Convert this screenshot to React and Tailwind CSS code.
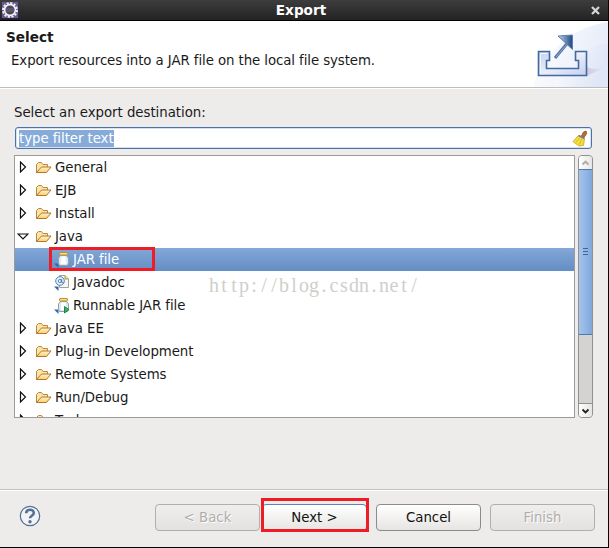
import React from 'react'
import clsx from 'clsx'

const items = [
  { label: 'General' },
  { label: 'EJB' },
  { label: 'Install' },
  { label: 'Java', open: true },
  { label: 'JAR file', icon: 'jar', selected: true },
  { label: 'Javadoc', icon: 'javadoc' },
  { label: 'Runnable JAR file', icon: 'runjar' },
  { label: 'Java EE' },
  { label: 'Plug-in Development' },
  { label: 'Remote Systems' },
  { label: 'Run/Debug' },
  { label: 'Tasks' },
]

function EclipseIcon() {
  return (
    <svg width="16" height="16" viewBox="0 0 16 16">
      <rect width="16" height="16" fill="#6b579b" />
      <circle cx="8" cy="8" r="7" fill="none" stroke="#eeeeee" strokeWidth="2" strokeDasharray="2.2 1.46" />
      <circle cx="8" cy="8" r="5.4" fill="#4a4658" stroke="#f4f4f4" strokeWidth="1.6" />
      <path d="M4 7h8M4 9h8" stroke="#6d6590" />
    </svg>
  )
}

function ExportBanner() {
  return (
    <svg width="75" height="66" viewBox="0 0 75 66" className="shrink-0">
      <defs>
        <linearGradient id="haze" x1="0" y1="0" x2="1" y2="0.3">
          <stop offset="0" stopColor="#ffffff" />
          <stop offset="1" stopColor="#dce4f6" />
        </linearGradient>
        <linearGradient id="tray" x1="0" y1="0" x2="1" y2="1">
          <stop offset="0" stopColor="#c4d2ea" />
          <stop offset="0.5" stopColor="#e9edf9" />
          <stop offset="1" stopColor="#c5d0eb" />
        </linearGradient>
        <linearGradient id="head" x1="0" y1="0" x2="1" y2="0">
          <stop offset="0" stopColor="#c7d8ec" />
          <stop offset="1" stopColor="#1e4584" />
        </linearGradient>
        <linearGradient id="shade" x1="0" y1="0" x2="1" y2="0">
          <stop offset="0" stopColor="#c9bfd2" />
          <stop offset="1" stopColor="#e2e4f4" />
        </linearGradient>
      </defs>
      <path d="M0 66C8 34 38 6 75 1V66z" fill="url(#haze)" opacity="0.7" />
      <path d="M20 66C28 42 48 26 75 22V66z" fill="url(#haze)" opacity="0.8" />
      <path d="M54 46C60 49 66 48 72 46L54 55z" fill="url(#shade)" opacity="0.7" />
      <path
        d="M5.500 30.500H16.500V39.500H13.500V47.500H45.500V39.500H42.500V30.500H53.500V54.500H5.500z"
        fill="url(#tray)"
        stroke="#4169a3"
        strokeWidth="1.600"
      />
      <path d="M7.500 32.500H14.500M7.500 32.500V52.500M44.500 32.500H51.500" fill="none" stroke="#f3f6fd" />
      <path d="M22 37L34.500 22" stroke="#54739f" strokeWidth="3" />
      <path d="M23 36L34 23" stroke="#8fadd3" strokeWidth="1" />
      <path d="M25 15L39.500 14V28.500z" fill="url(#head)" stroke="#5e80ae" />
    </svg>
  )
}

function BroomIcon() {
  return (
    <svg width="16" height="17" viewBox="0 0 16 17">
      <path d="M9.500 6L11.500 2L14 1L14.700 3.500L12 7.500z" fill="#b27429" stroke="#785020" strokeWidth="0.800" />
      <path d="M6.500 5.500L12.500 8.500L11.500 15.500L7 16L1 11.500z" fill="#f4df3c" stroke="#bfa41c" strokeWidth="0.800" />
      <path d="M4 12L8 7.500M7.500 14.500L9.800 8.500" stroke="#c4a91e" strokeWidth="0.700" />
      <path d="M6.500 5.500L12.500 8.500" stroke="#8672a0" strokeWidth="1.500" />
    </svg>
  )
}

function FolderIcon() {
  return (
    <svg width="16" height="16" viewBox="0 0 16 16">
      <defs>
        <linearGradient id="folder" x1="0" y1="0" x2="0" y2="1">
          <stop offset="0" stopColor="#fff5d0" />
          <stop offset="1" stopColor="#f8cf6c" />
        </linearGradient>
      </defs>
      <path d="M0.500 12.500V4.500L2.500 2.500H5.500L7 4.500H11.500V7" fill="#fae4a8" stroke="#bf853a" />
      <path d="M0.500 12.500L5.500 7H15L10.500 12.500z" fill="url(#folder)" stroke="#b5752a" />
    </svg>
  )
}

function ChildIcon({ kind }) {
  return (
    <svg width="16" height="18" viewBox="0 0 16 18">
      <path d="M0 12.500H4.500V17z" fill="#2d6ca5" />
      {kind === 'javadoc' ? (
        <>
          <path d="M5.500 1.500H11L14.500 5V13.500H5.500z" fill="#f3f6fe" stroke="#a9a08a" />
          <path d="M11 1.500V5H14.500" fill="#ecd28a" stroke="#b99b4c" />
          <circle cx="6" cy="7" r="4.300" fill="#eef4fc" stroke="#3d73ac" strokeWidth="0.900" />
          <circle cx="5.800" cy="7" r="1.600" fill="none" stroke="#3d73ac" strokeWidth="0.900" />
          <path d="M7.700 5V8.600H9.500" fill="none" stroke="#3d73ac" strokeWidth="0.900" />
        </>
      ) : (
        <>
          <path d="M6.500 4.500H12.500L14.500 7V12L13.500 14.500H5.500L4.500 12V7z" fill="#dfe9ee" stroke="#8ba2b1" />
          <path d="M7.500 5.500H11.500L12.500 13H6.500z" fill="#ffffff" />
          <rect x="5.500" y="1.500" width="8" height="2.500" rx="0.500" fill="#f8dc86" stroke="#c2922f" />
          {kind === 'runjar' && <path d="M10.500 9.500L15 12.700L10.500 16z" fill="#3aae68" stroke="#208447" />}
        </>
      )}
    </svg>
  )
}

function Expander({ open }) {
  return (
    <svg width="12" height="12" viewBox="0 0 12 12" className="mb-px">
      {open ? (
        <path d="M1 4H11L6 9z" fill="#fff" stroke="#111" strokeWidth="1.200" />
      ) : (
        <path d="M3.500 1V11L8.500 6z" fill="#fff" stroke="#111" strokeWidth="1.200" />
      )}
    </svg>
  )
}

function TreeRow({ item }) {
  return (
    <div
      className={clsx(
        'flex h-[23px] shrink-0 items-center tracking-[-0.06px]',
        item.selected ? 'bg-linear-to-b from-[#83a8d9] to-[#648dc3] text-white' : 'text-[#1a1a1a]',
        item.icon ? 'pl-[39px]' : 'pl-[2px]'
      )}
    >
      {item.icon ? (
        <ChildIcon kind={item.icon} />
      ) : (
        <>
          <Expander open={item.open} />
          <span className="ml-[7px]"><FolderIcon /></span>
        </>
      )}
      <span className="ml-[3px] whitespace-nowrap">{item.label}</span>
    </div>
  )
}

function Scrollbar() {
  return (
    <div className="flex h-[263px] w-[15px] flex-col overflow-hidden rounded-[4px] border border-[#919191] bg-[#d4d3d2]">
      <div className="flex h-[13px] items-center justify-center bg-linear-to-r from-white to-[#e5e5e3]">
        <svg width="9" height="6" viewBox="0 0 9 6"><path d="M1.500 4.500L4.500 1.500L7.500 4.500" fill="none" stroke="#aaa" strokeWidth="1.800" /></svg>
      </div>
      <div className="-mx-px flex h-[166px] flex-col items-center justify-center gap-[2px] border border-[#4e78b2] bg-linear-to-r from-[#a6c4ec] to-[#80a8dc] pb-[2px]">
        <div className="h-px w-[5px] bg-[#3f679f]" />
        <div className="h-px w-[5px] bg-[#3f679f]" />
        <div className="h-px w-[5px] bg-[#3f679f]" />
      </div>
      <div className="flex-1" />
      <div className="flex h-[14px] items-center justify-center border-t border-[#919191] bg-linear-to-r from-white to-[#e5e5e3]">
        <svg width="9" height="6" viewBox="0 0 9 6"><path d="M1.500 1.500L4.500 4.500L7.500 1.500" fill="none" stroke="#222" strokeWidth="1.800" /></svg>
      </div>
    </div>
  )
}

function Button({ children, disabled, focused }) {
  return (
    <button
      disabled={disabled}
      className={clsx(
        'h-[27px] w-[105px] rounded-[4px] border',
        disabled
          ? 'border-[#b0afad] bg-linear-to-b from-[#efeeed] to-[#e3e2e0] text-[#b0aeab] [text-shadow:1px_1px_0_#fff]'
          : 'bg-linear-to-b from-white to-[#e6e5e3] text-[#111]',
        !disabled && (focused ? 'border-[#5f84b5]' : 'border-[#8d8b88]')
      )}
    >
      {children}
    </button>
  )
}

function App() {
  return (
    <div className="relative flex h-[548px] w-[609px] flex-col overflow-hidden border-r border-b border-black bg-[#edeceb] font-['DejaVu_Sans',sans-serif] text-[13.33px] text-[#1a1a1a]">
      <div className="flex h-[21px] shrink-0 items-center justify-between border-b border-black bg-linear-to-b from-[#3d3d3d] via-[#303030] to-[#232323] pr-[8px] pl-[2px]">
        <EclipseIcon />
        <span className="mr-[7px] pt-px text-[13.6px] leading-[19px] font-bold text-white">Export</span>
        <svg width="9" height="9" viewBox="0 0 9 9"><path d="M1 1L8 8M8 1L1 8" stroke="#d5d5d5" strokeWidth="2.300" /></svg>
      </div>

      <div className="flex h-[67px] shrink-0 justify-between border-b border-[#bdbdbd] bg-white">
        <div className="pt-[6px]">
          <h1 className="pl-[6px] text-[13.6px] leading-5 font-bold">Select</h1>
          <p className="mt-[4px] pl-[11px] leading-5 tracking-[-0.085px]">Export resources into a JAR file on the local file system.</p>
        </div>
        <ExportBanner />
      </div>

      <div className="flex-1 border-t border-white px-[14px] pt-[13px]">
        <p className="pt-px leading-[19px] tracking-[-0.04px]">Select an export destination:</p>
        <div className="mt-[5px] ml-px flex h-[22px] w-[577px] items-center justify-between rounded-[3px] border border-[#4b73a7] bg-white px-[3px] shadow-[inset_0_0_0_1px_#d5e1f0]">
          <span className="h-[17px] bg-[#86abd9] leading-[17px] tracking-[-0.06px] text-white">type filter text</span>
          <BroomIcon />
        </div>
        <div className="mt-[6px] flex gap-[3px]">
          <div className="flex h-[263px] w-[561px] flex-col overflow-hidden border border-[#9d9b98] bg-white">
            {items.map((item) => (
              <TreeRow key={item.label} item={item} />
            ))}
          </div>
          <Scrollbar />
        </div>
      </div>

      <div className="flex h-[58px] shrink-0 items-start justify-between border-t border-[#c2c1bf] pr-[13px] pl-[19px] shadow-[inset_0_1px_0_#fff]">
        <svg width="22" height="22" viewBox="0 0 22 22" className="mt-[15px]">
          <circle cx="11" cy="11" r="9.700" fill="#f2f3f5" stroke="#566f94" strokeWidth="1.200" />
          <path d="M7.200 8.200C7.200 3.700 14.800 3.700 14.800 8C14.800 10.800 11 10.700 11 13.300" fill="none" stroke="#566f94" strokeWidth="2.600" />
          <circle cx="11" cy="16.700" r="1.700" fill="#566f94" />
        </svg>
        <div className="mt-[14px] flex">
          <Button disabled>&lt; Back</Button>
          <span className="ml-[2px]"><Button focused>Next &gt;</Button></span>
          <span className="ml-[9px]"><Button>Cancel</Button></span>
          <span className="ml-[9px]"><Button disabled>Finish</Button></span>
        </div>
      </div>

      {/* highlights over the clicked items */}
      <div className="absolute top-[247px] left-[49px] h-[24px] w-[106px] border-[3px] border-[#ee1c25]" />
      <div className="absolute top-[498px] left-[261px] h-[34px] w-[108px] border-[3px] border-[#ee1c25]" />

      {/* watermark, one cell per character */}
      <div className="absolute top-[274px] left-[209px] flex font-['Liberation_Serif',serif] text-[20px] leading-[22px] text-[#cfcfca]">
        {'http://blog.csdn.net/'.split('').map((c, i) => (
          <span key={i} className="w-[10px] text-center">{c}</span>
        ))}
      </div>
    </div>
  )
}

export default App
